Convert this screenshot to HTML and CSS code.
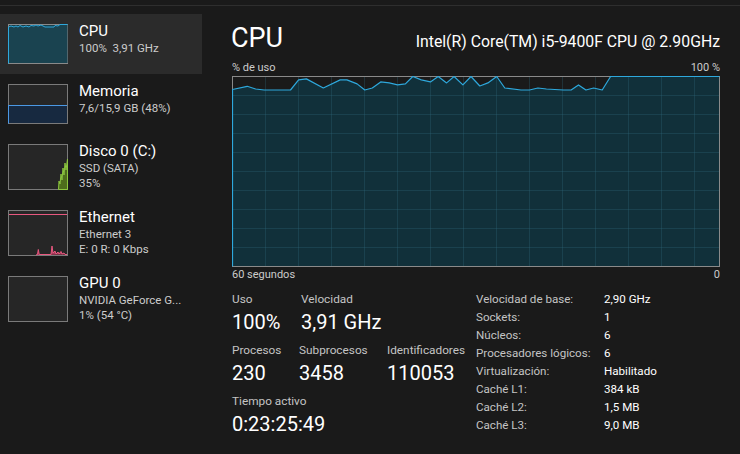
FILE: index.html
```html
<!DOCTYPE html>
<html lang="es">
<head>
<meta charset="utf-8">
<title>Rendimiento - CPU</title>
<link rel="stylesheet" href="styles.css">
</head>
<body>
<div class="topbar"></div>
<div class="app">
  <aside class="sidebar">
    <div class="item selected">
      <svg class="thumb t40" width="60" height="40" viewBox="0 0 60 40">
        <rect x="0.5" y="0.5" width="59" height="39" fill="#173d48" stroke="#8a8a8a"/>
        <polygon points="0.5,3 3,2 6,3 8,2 10,3 12,1.5 15,3 18,2 21,3 23,1.5 26,2 28,1 30,2 33,1 35,2 37,3 42,3 46,3 47,1.5 50,2 52,0.5 59.5,0.5 59.5,39 0.5,39" fill="#1a4350"/>
        <polyline points="0.5,39.5 0.5,3 3,2 6,3 8,2 10,3 12,1.5 15,3 18,2 21,3 23,1.5 26,2 28,1 30,2 33,1 35,2 37,3 42,3 46,3 47,1.5 50,2 52,0.5 59.5,0.5" fill="none" stroke="#2ea8dc" stroke-width="1"/>
      </svg>
      <div class="info">
        <div class="title">CPU</div>
        <div class="sub">100%&nbsp; 3,91 GHz</div>
      </div>
    </div>
    <div class="item">
      <svg class="thumb t40" width="60" height="40" viewBox="0 0 60 40">
        <rect x="0.5" y="0.5" width="59" height="39" fill="#262626" stroke="#7a7a7a"/>
        <rect x="1" y="21" width="58" height="18" fill="#172940"/>
        <line x1="1" y1="21.5" x2="59" y2="21.5" stroke="#4b98e4"/>
        <line x1="0.5" y1="21" x2="0.5" y2="39.5" stroke="#4b98e4"/>
      </svg>
      <div class="info">
        <div class="title">Memoria</div>
        <div class="sub">7,6/15,9 GB (48%)</div>
      </div>
    </div>
    <div class="item">
      <svg class="thumb t46" width="60" height="46" viewBox="0 0 60 46">
        <rect x="0.5" y="0.5" width="59" height="45" fill="#262626" stroke="#7a7a7a"/>
        <polygon points="50.5,45.5 51,37 52,40 53,30 54,36 55,24 56,31 57,19 58,26 59.5,15 59.5,45.5" fill="#4e6d1c" stroke="#8cc63f" stroke-width="1"/>
      </svg>
      <div class="info">
        <div class="title">Disco 0 (C:)</div>
        <div class="sub">SSD (SATA)</div>
        <div class="sub">35%</div>
      </div>
    </div>
    <div class="item">
      <svg class="thumb t46" width="60" height="46" viewBox="0 0 60 46">
        <rect x="0.5" y="0.5" width="59" height="45" fill="#262626" stroke="#7a7a7a"/>
        <line x1="1" y1="4.5" x2="59" y2="4.5" stroke="#e8587f"/>
        <polyline points="28,45 29.5,44.5 30.3,39.5 31.2,44.5 43,44.5 44,36 45,43 47,41 48,44 50,42 51,44 53,41.5 54,44 56,43 57,44.5 59,44.5" fill="#a83a5a" stroke="#e8587f" stroke-width="1"/>
      </svg>
      <div class="info">
        <div class="title">Ethernet</div>
        <div class="sub">Ethernet 3</div>
        <div class="sub">E: 0 R: 0 Kbps</div>
      </div>
    </div>
    <div class="item">
      <svg class="thumb t46" width="60" height="46" viewBox="0 0 60 46">
        <rect x="0.5" y="0.5" width="59" height="45" fill="#262626" stroke="#7a7a7a"/>
      </svg>
      <div class="info">
        <div class="title">GPU 0</div>
        <div class="sub">NVIDIA GeForce G...</div>
        <div class="sub">1% (54 °C)</div>
      </div>
    </div>
  </aside>

  <main class="main">
    <header class="head">
      <h1 class="name">CPU</h1>
      <div class="model">Intel(R) Core(TM) i5-9400F CPU @ 2.90GHz</div>
    </header>
    <div class="axis"><span>% de uso</span><span>100 %</span></div>
    <svg class="graph" width="488" height="191" viewBox="0 0 488 191">
      <rect x="0" y="0" width="488" height="191" fill="#1a1a1a"/>
      <polygon fill="#11303a" points="0.5,13.5 15.2,10.3 23.6,13 32.1,14 58.5,14 66.6,3.9 74.4,2.9 91.3,12 108.2,3.9 114.9,3.9 125.1,7.9 132.8,14 140.3,12 148.7,5.9 157.2,6.9 165.6,8.9 173.4,7.9 180.8,0.5 189.3,3.9 198.4,5.9 206.2,0.5 214.6,6.9 222.1,0.5 230.9,8.9 239,0.5 247.8,10 255.9,6.9 264.7,0.5 272.8,12 289,14 297.5,14 305.9,12 314.4,13 331.3,14 339.1,14 346.5,8.9 353.9,14 361.7,12 370.2,14 378.6,0.5 487.5,0.5 487.5,190.5 0.5,190.5"/>
      <g stroke="rgba(48,104,120,0.32)" stroke-width="1">
        <line x1="33.5" y1="1" x2="33.5" y2="190"/>
        <line x1="66.5" y1="1" x2="66.5" y2="190"/>
        <line x1="99.5" y1="1" x2="99.5" y2="190"/>
        <line x1="132.5" y1="1" x2="132.5" y2="190"/>
        <line x1="165.5" y1="1" x2="165.5" y2="190"/>
        <line x1="198.5" y1="1" x2="198.5" y2="190"/>
        <line x1="231.5" y1="1" x2="231.5" y2="190"/>
        <line x1="264.5" y1="1" x2="264.5" y2="190"/>
        <line x1="297.5" y1="1" x2="297.5" y2="190"/>
        <line x1="330.5" y1="1" x2="330.5" y2="190"/>
        <line x1="363.5" y1="1" x2="363.5" y2="190"/>
        <line x1="396.5" y1="1" x2="396.5" y2="190"/>
        <line x1="429.5" y1="1" x2="429.5" y2="190"/>
        <line x1="462.5" y1="1" x2="462.5" y2="190"/>
        <line x1="1" y1="19.5" x2="487" y2="19.5"/>
        <line x1="1" y1="38.5" x2="487" y2="38.5"/>
        <line x1="1" y1="57.5" x2="487" y2="57.5"/>
        <line x1="1" y1="76.5" x2="487" y2="76.5"/>
        <line x1="1" y1="95.5" x2="487" y2="95.5"/>
        <line x1="1" y1="114.5" x2="487" y2="114.5"/>
        <line x1="1" y1="133.5" x2="487" y2="133.5"/>
        <line x1="1" y1="152.5" x2="487" y2="152.5"/>
        <line x1="1" y1="171.5" x2="487" y2="171.5"/>
      </g>
      <rect x="0.5" y="0.5" width="487" height="190" fill="none" stroke="#8a8a8a"/>
      <polyline fill="none" stroke="#2ea8dc" stroke-width="1.2" stroke-linejoin="round" points="0.5,190.5 0.5,13.5 15.2,10.3 23.6,13 32.1,14 58.5,14 66.6,3.9 74.4,2.9 91.3,12 108.2,3.9 114.9,3.9 125.1,7.9 132.8,14 140.3,12 148.7,5.9 157.2,6.9 165.6,8.9 173.4,7.9 180.8,0.5 189.3,3.9 198.4,5.9 206.2,0.5 214.6,6.9 222.1,0.5 230.9,8.9 239,0.5 247.8,10 255.9,6.9 264.7,0.5 272.8,12 289,14 297.5,14 305.9,12 314.4,13 331.3,14 339.1,14 346.5,8.9 353.9,14 361.7,12 370.2,14 378.6,0.5 487.5,0.5"/>
    </svg>
    <div class="axis bottom"><span>60 segundos</span><span>0</span></div>

    <section class="stats">
      <div class="dyn">
        <div class="row">
          <div class="stat c-uso"><div class="lbl">Uso</div><div class="val">100%</div></div>
          <div class="stat"><div class="lbl">Velocidad</div><div class="val">3,91 GHz</div></div>
        </div>
        <div class="row">
          <div class="stat c-proc"><div class="lbl">Procesos</div><div class="val">230</div></div>
          <div class="stat c-sub"><div class="lbl">Subprocesos</div><div class="val">3458</div></div>
          <div class="stat c-id"><div class="lbl">Identificadores</div><div class="val">110053</div></div>
        </div>
        <div class="row">
          <div class="stat"><div class="lbl">Tiempo activo</div><div class="val">0:23:25:49</div></div>
        </div>
      </div>
      <dl class="specs">
        <dt>Velocidad de base:</dt><dd>2,90 GHz</dd>
        <dt>Sockets:</dt><dd>1</dd>
        <dt>Núcleos:</dt><dd>6</dd>
        <dt>Procesadores lógicos:</dt><dd>6</dd>
        <dt>Virtualización:</dt><dd>Habilitado</dd>
        <dt>Caché L1:</dt><dd>384 kB</dd>
        <dt>Caché L2:</dt><dd>1,5 MB</dd>
        <dt>Caché L3:</dt><dd>9,0 MB</dd>
      </dl>
    </section>
  </main>
</div>
</body>
</html>
```

FILE: styles.css
```css
* { box-sizing: border-box; }

html, body {
  margin: 0;
  padding: 0;
  background: #1a1a1a;
  color: #ffffff;
  font-family: Roboto, "Noto Sans", "Liberation Sans", sans-serif;
  width: 740px;
  height: 454px;
  overflow: hidden;
}

.topbar {
  height: 6px;
  border-bottom: 1px solid #2e2e2e;
}

.app {
  display: flex;
  height: 448px;
}

/* Sidebar */
.sidebar {
  width: 202px;
  flex: none;
  padding-top: 8px;
}

.item {
  display: flex;
  align-items: flex-start;
  padding: 10px 0 10px 8px;
}

.item.selected {
  background: #2b2b2b;
}

.thumb {
  display: block;
  flex: none;
}

.info {
  margin: -3px 0 -4px 11px;
  white-space: nowrap;
}

.title {
  font-size: 15px;
  line-height: 20px;
  color: #ffffff;
}

.sub {
  font-size: 11.5px;
  line-height: 15px;
  color: #cccccc;
}

/* Main */
.main {
  flex: 1;
  padding: 14px 21px 0 29px;
}

.head {
  display: flex;
  justify-content: space-between;
  align-items: baseline;
  height: 36px;
}

.name {
  margin: 0;
  font-size: 27px;
  font-weight: 400;
  line-height: 36px;
}

.model {
  font-size: 15.8px;
  color: #ffffff;
}

.axis {
  display: flex;
  justify-content: space-between;
  width: 489px;
  margin-top: 5px;
  padding-left: 1px;
  height: 14px;
  font-size: 11px;
  line-height: 14px;
  color: #cccccc;
}

.axis.bottom {
  margin-top: 1px;
}

.graph {
  display: block;
  margin-top: 1px;
  margin-left: 1px;
}

.stats {
  display: flex;
  margin-top: 8px;
  padding-left: 1px;
}

.dyn {
  width: 244px;
  flex: none;
}

.row {
  display: flex;
  margin-bottom: 5px;
}

.stat { white-space: nowrap; }
.c-uso { width: 69px; }
.c-proc { width: 67px; }
.c-sub { width: 88px; }

.lbl {
  font-size: 11.8px;
  line-height: 18px;
  color: #c4c4c4;
}

.val {
  font-size: 20px;
  line-height: 28px;
  color: #ffffff;
}

.specs {
  margin: 0;
  display: grid;
  grid-template-columns: 128px auto;
  grid-auto-rows: 18px;
  font-size: 11.6px;
  line-height: 18px;
}

.specs dt {
  color: #c4c4c4;
}

.specs dd {
  margin: 0;
  color: #ffffff;
}
```
